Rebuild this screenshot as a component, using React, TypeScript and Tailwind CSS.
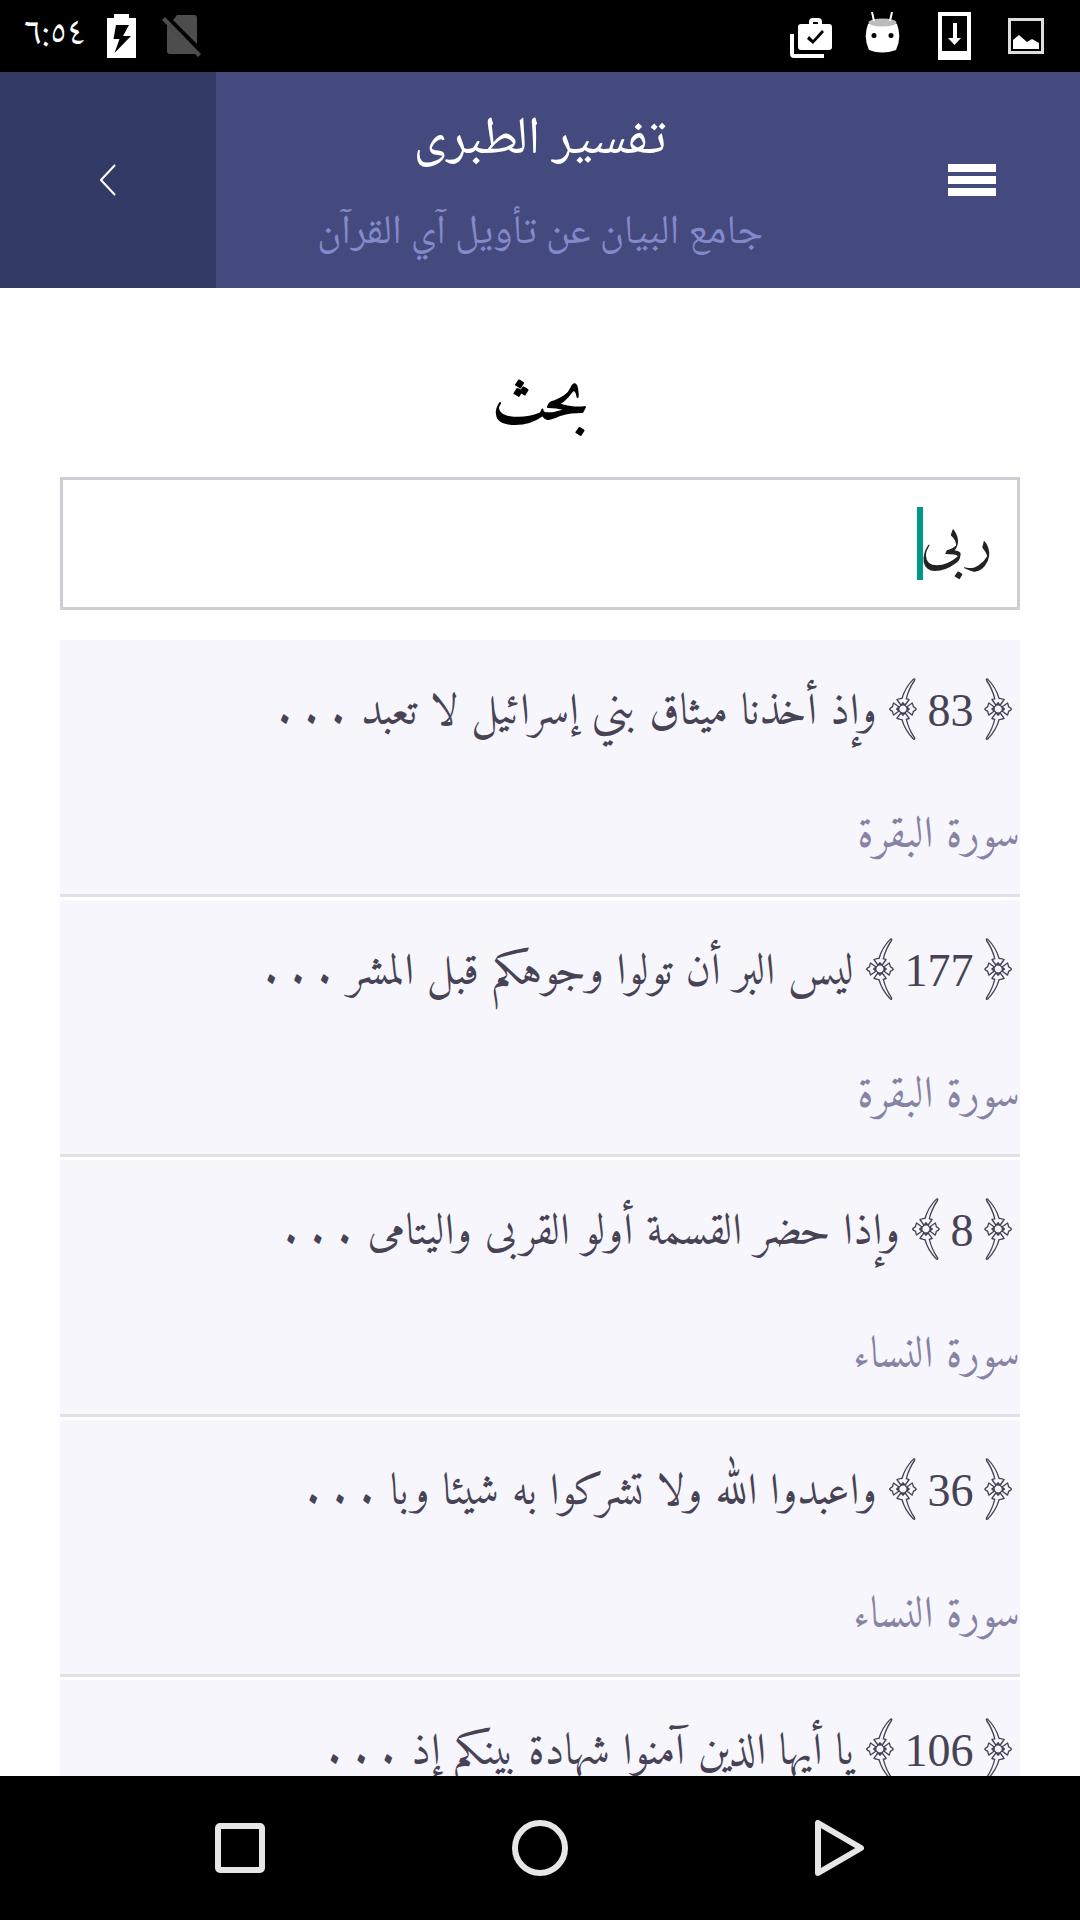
type Verse = { number: string; text: string; surah?: string };

const verses: Verse[] = [
  { number: '83', text: 'وإذ أخذنا ميثاق بني إسرائيل لا تعبد', surah: 'سورة البقرة' },
  { number: '177', text: 'ليس البر أن تولوا وجوهكم قبل المشر', surah: 'سورة البقرة' },
  { number: '8', text: 'وإذا حضر القسمة أولو القربى واليتامى', surah: 'سورة النساء' },
  { number: '36', text: 'واعبدوا الله ولا تشركوا به شيئا وبا', surah: 'سورة النساء' },
  { number: '106', text: 'يا أيها الذين آمنوا شهادة بينكم إذ' },
];

function StatusBar() {
  return (
    <div className="flex h-[72px] shrink-0 items-center justify-between bg-black px-6 text-white">
      <div className="flex items-center">
        <time className="w-[60px] whitespace-nowrap font-['Noto_Naskh_Arabic',serif] text-[39px] leading-[56px]">٦:٥٤</time>
        <svg className="ml-[23px] h-11 w-[29px]" viewBox="0 0 29 44" aria-hidden="true">
          <path fill="#fff" fillRule="evenodd" d="M7 0h15v4h7v40H0V4h7zM9 11 6.500 25h6L7.500 39 24 22h-8l6-11z" />
        </svg>
        <svg className="ml-[26px] h-[42px] w-10" viewBox="0 0 40 42" fill="#4d4d4d" aria-hidden="true">
          <path d="M11 5 15 0h17q3 0 3 3v26zM5 10 34 39H8q-3 0-3-3z" />
          <path d="M0 5 3 2 39 39l-3 3z" />
        </svg>
      </div>
      <div className="flex items-center pr-3">
        <svg className="mt-1 h-10 w-[43px]" viewBox="0 0 43 40" fill="none" aria-hidden="true">
          <path fill="#fff" fillRule="evenodd" d="M11 6h8V4q0-4 4-4h5q4 0 4 4v2h7q3 0 3 3v20q0 3-3 3H11q-3 0-3-3V9q0-3 3-3zM23 4v2h5V4zM19 18l-2 3 6 5 11-12-2-2-9 10z" />
          <path stroke="#fff" strokeWidth="4" d="M2 16v20q0 2 2 2h30" />
        </svg>
        <svg className="-mt-2 ml-8 h-[41px] w-[35px]" viewBox="0 0 35 41" aria-hidden="true">
          <path d="M3 12Q17 4 32 12 37 26 31 38 17 43 4 38-2 26 3 12z" fill="#fff" />
          <ellipse cx="17.500" cy="10.500" rx="14" ry="4" fill="#bbb" />
          <path d="M7 0 9 9M27 0 25 9" stroke="#fff" strokeWidth="2" />
          <circle cx="9" cy="23.500" r="2.500" />
          <circle cx="26" cy="23.500" r="2.500" />
        </svg>
        <svg className="ml-[38px] h-12 w-[33px]" viewBox="0 0 33 48" fill="#fff" aria-hidden="true">
          <path fillRule="evenodd" d="M0 0h33v48H0zM4 4v35h25V4z" />
          <path d="M15 11h4v15h4l-6.500 7L10 26h5z" />
        </svg>
        <svg className="ml-[37px] h-9 w-9" viewBox="0 0 36 36" aria-hidden="true">
          <rect x="1.500" y="1.500" width="33" height="33" fill="none" stroke="#ddd" strokeWidth="3" />
          <path d="M5 31v-9l6-5 8 7 5-3 7 4v6z" fill="#fff" />
        </svg>
      </div>
    </div>
  );
}

function Header() {
  return (
    <header className="flex h-[216px] shrink-0 bg-[#444a7e]">
      <button aria-label="رجوع" className="flex w-1/5 items-center justify-center bg-[#343a66]">
        <svg className="h-8 w-4" viewBox="0 0 16 32" fill="none" stroke="#fff" strokeWidth="2" aria-hidden="true">
          <path d="M15 1 1 16l14 15" />
        </svg>
      </button>
      <div className="flex flex-1 flex-col items-center justify-center whitespace-nowrap pt-3 font-['Noto_Naskh_Arabic',serif]">
        <h1 className="text-[53px] leading-[96px] text-white">تفسير الطبرى</h1>
        <p className="text-[41px] leading-[88px] text-[#8489cc]">جامع البيان عن تأويل آي القرآن</p>
      </div>
      <button aria-label="القائمة" className="flex w-1/5 flex-col items-center justify-center gap-1">
        <span className="h-2 w-12 bg-white" />
        <span className="h-2 w-12 bg-white" />
        <span className="h-2 w-12 bg-white" />
      </button>
    </header>
  );
}

function VerseRow({ verse }: { verse: Verse }) {
  return (
    <li className="border-b-[3px] border-white">
      <a href={'#verse-' + verse.number} className="block h-[257px] whitespace-nowrap border-b-[3px] border-[#e0e0e6] bg-[#f6f6fc] pt-6">
        <div className="flex h-[100px] items-center text-[44px] text-[#474355]">
          <span className="mb-5 text-[54px]">﴿</span>
          <span className="mb-2 px-2 font-['Liberation_Serif',serif] text-[46px]">{verse.number}</span>
          <span className="mb-5 text-[54px]">﴾</span>
          <span className="pr-1">{verse.text}</span>
          <span className="pr-4">. . .</span>
        </div>
        {verse.surah && <div className="flex h-[130px] items-center pt-4 text-[44px] text-[#8683a4]">{verse.surah}</div>}
      </a>
    </li>
  );
}

function NavBar() {
  return (
    <nav className="flex h-36 shrink-0 items-center justify-center gap-[244px] bg-black">
      <button aria-label="التطبيقات الأخيرة">
        <svg className="h-14 w-14" viewBox="0 0 56 56" fill="none" stroke="#e6e6e6" strokeWidth="6" aria-hidden="true">
          <rect x="6" y="6" width="44" height="44" rx="2" />
        </svg>
      </button>
      <button aria-label="الرئيسية">
        <svg className="h-14 w-14" viewBox="0 0 56 56" fill="none" stroke="#e6e6e6" strokeWidth="6" aria-hidden="true">
          <circle cx="28" cy="28" r="25" />
        </svg>
      </button>
      <button aria-label="رجوع">
        <svg className="h-14 w-14" viewBox="0 0 56 56" fill="none" stroke="#e6e6e6" strokeWidth="6" strokeLinejoin="round" aria-hidden="true">
          <path d="M6 3v50l43-25z" />
        </svg>
      </button>
    </nav>
  );
}

export default function App() {
  return (
    <div className="flex h-screen flex-col overflow-hidden bg-white font-['Amiri',serif]">
      <StatusBar />
      <Header />
      <main dir="rtl" className="flex min-h-0 flex-1 flex-col overflow-hidden px-[60px]">
        <label htmlFor="search" className="flex h-[189px] shrink-0 items-center justify-center pt-11 text-[63px] font-bold text-black">
          بحث
        </label>
        <div className="relative shrink-0">
          <input
            id="search"
            type="text"
            defaultValue="ربى"
            className="block h-[133px] w-full border-[3px] border-[#cecdd4] bg-white px-6 text-[60px] text-[#222] outline-none"
          />
          <span className="absolute right-[97px] top-[30px] h-[73px] w-[6px] bg-[#009688]" />
        </div>
        <ul className="mt-[30px] min-h-0 flex-1 overflow-hidden">
          {verses.map((verse) => (
            <VerseRow key={verse.number} verse={verse} />
          ))}
        </ul>
      </main>
      <NavBar />
    </div>
  );
}
